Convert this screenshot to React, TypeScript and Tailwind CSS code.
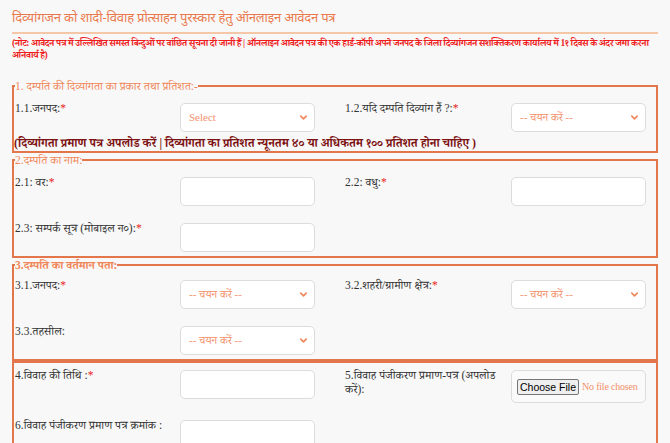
import { ReactNode } from "react";

const SERIF = { fontFamily: '"Liberation Serif", "Noto Serif Devanagari", serif' };

function Label({ children, req }: { children: ReactNode; req?: boolean }) {
  return (
    <div className="pr-2 text-[11.5px] leading-[14px] text-[#333]">
      {children}
      {req && <span className="text-[#e81c1c]">*</span>}
    </div>
  );
}

function Chevron() {
  return (
    <svg width="9" height="9" viewBox="0 0 10 10" className="shrink-0">
      <path d="M2 3.5 L5 6.5 L8 3.5" fill="none" stroke="#f0875a" strokeWidth="1.8" strokeLinecap="round" strokeLinejoin="round" />
    </svg>
  );
}

function Select({ text = "-- चयन करें --" }: { text?: string }) {
  return (
    <div className="mt-[2px] flex h-[29px] w-[135px] items-center justify-between rounded-[5px] border border-[#dcdcdc] bg-white pl-[8px] pr-[6px] text-[11px] text-[#f3906a]">
      <span>{text}</span>
      <Chevron />
    </div>
  );
}

function TextBox() {
  return <div className="mt-[2px] h-[29px] w-[135px] rounded-[5px] border border-[#dcdcdc] bg-white" />;
}

function FileBox() {
  return (
    <div className="mt-[2px] flex h-[33px] w-[135px] items-center gap-[3px] overflow-hidden rounded-[5px] border border-[#dcdcdc] bg-[#fafafa] pl-[5px]">
      <span
        className="whitespace-nowrap rounded-[2px] border border-[#767676] bg-[#efefef] px-[2px] text-[10.5px] leading-[14px] text-black"
        style={{ fontFamily: '"Liberation Sans", Arial, sans-serif' }}
      >
        Choose File
      </span>
      <span className="whitespace-nowrap text-[10px] tracking-[-0.2px] text-[#f3906a]">No file chosen</span>
    </div>
  );
}

function Row({ children, className = "" }: { children: ReactNode; className?: string }) {
  return <div className={`grid grid-cols-[165px_165px_166px_135px] items-start ${className}`}>{children}</div>;
}

function Section({ legend, bold, children, className = "" }: { legend?: string; bold?: boolean; children: ReactNode; className?: string }) {
  return (
    <fieldset className={`min-w-0 border-2 border-[#e3774b] px-0 pl-[1px] ${className}`}>
      {legend && (
        <legend className={`h-[14px] px-0 text-[11.5px] leading-[14px] text-[#f08758] ${bold ? "font-bold" : ""}`}>{legend}</legend>
      )}
      {children}
    </fieldset>
  );
}

export default function App() {
  return (
    <div className="min-h-[443px] w-[670px] overflow-hidden bg-[#f8f8f8] px-[12px] pt-[6px]" style={SERIF}>
      <h1
        className="h-[22px] whitespace-nowrap text-[13px] leading-[22px] tracking-[-0.2px] text-[#ea7a4e]"
        style={{ fontFamily: '"Noto Sans", "Liberation Sans", sans-serif' }}
      >
        दिव्यांगजन को शादी-विवाह प्रोत्साहन पुरस्कार हेतु ऑनलाइन आवेदन पत्र
      </h1>
      <div className="mt-[4px] h-[2px] bg-[#f6c7a6]" />
      <p className="mt-[3px] h-[24px] text-[9.5px] font-bold leading-[12px] tracking-[-0.4px] text-[#ee1c1c]">
        (नोट: आवेदन पत्र में उल्लिखित समस्त बिन्दुओं पर वांछित सूचना दी जानी हैं | ऑनलाइन आवेदन पत्र की एक हार्ड-कॉपी अपने जनपद के जिला दिव्यांगजन सशक्तिकरण कार्यालय में 1१ दिवस के अंदर जमा करना अनिवार्य है)
      </p>

      <Section legend="1. दम्पति की दिव्यांगता का प्रकार तथा प्रतिशत:-" className="mt-[18px]">
        <Row className="pt-[8px]">
          <Label req>1.1.जनपद:</Label>
          <Select text="Select" />
          <Label req>1.2.यदि दम्पति दिव्यांग हैं ?:</Label>
          <Select />
        </Row>
        <p className="mt-[3px] -ml-[1px] h-[16px] whitespace-nowrap text-[12px] font-bold leading-[16px] text-[#7d1212]">
          (दिव्यांगता प्रमाण पत्र अपलोड करें | दिव्यांगता का प्रतिशत न्यूनतम ४० या अधिकतम १०० प्रतिशत होना चाहिए )
        </p>
      </Section>

      <Section legend="2.दम्पति का नाम:">
        <Row className="pt-[8px]">
          <Label req>2.1: वर:</Label>
          <TextBox />
          <Label req>2.2: वधु:</Label>
          <TextBox />
        </Row>
        <Row className="mt-[15px] pb-[4px]">
          <Label req>2.3: सम्पर्क सूत्र (मोबाइल न०):</Label>
          <TextBox />
        </Row>
      </Section>

      <Section legend="3.दम्पति का वर्तमान पता:" bold>
        <Row className="pt-[6px]">
          <Label req>3.1.जनपद:</Label>
          <Select />
          <Label req>3.2.शहरी/ग्रामीण क्षेत्र:</Label>
          <Select />
        </Row>
        <Row className="mt-[15px] pb-[4px]">
          <Label>3.3.तहसील:</Label>
          <Select />
        </Row>
      </Section>

      <Section>
        <Row className="pt-[5px]">
          <Label req>4.विवाह की तिथि :</Label>
          <TextBox />
          <Label>5.विवाह पंजीकरण प्रमाण-पत्र (अपलोड करें):</Label>
          <FileBox />
        </Row>
        <Row className="mt-[15px] pb-[20px]">
          <Label>6.विवाह पंजीकरण प्रमाण पत्र क्रमांक :</Label>
          <TextBox />
        </Row>
      </Section>
    </div>
  );
}
